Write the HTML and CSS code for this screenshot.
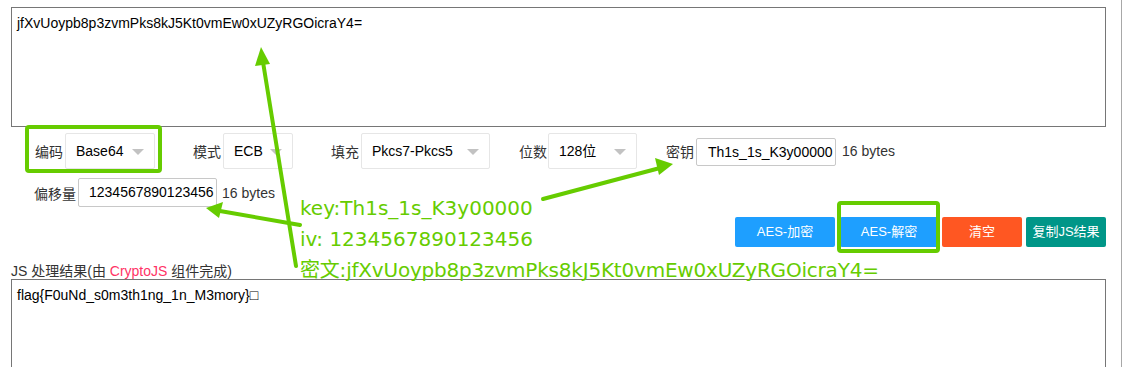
FILE: index.html
```html
<!DOCTYPE html>
<html lang="zh-CN">
<head>
<meta charset="utf-8">
<title>AES</title>
<link rel="stylesheet" href="styles.css">
</head>
<body>
<div class="page">
  <div class="box top-box">jfXvUoypb8p3zvmPks8kJ5Kt0vmEw0xUZyRGOicraY4=</div>

  <div class="opts">
    <span class="lbl l-enc">编码</span>
    <div class="select s-enc">Base64<i class="caret"></i></div>
    <span class="lbl l-mode">模式</span>
    <div class="select s-mode">ECB<i class="caret"></i></div>
    <span class="lbl l-pad">填充</span>
    <div class="select s-pad">Pkcs7-Pkcs5<i class="caret"></i></div>
    <span class="lbl l-bits">位数</span>
    <div class="select s-bits">128位<i class="caret"></i></div>
    <span class="lbl l-key">密钥</span>
    <div class="input i-key">Th1s_1s_K3y00000</div>
    <span class="bytes b-key">16 bytes</span>
  </div>

  <div class="opts2">
    <span class="lbl l-iv">偏移量</span>
    <div class="input i-iv">1234567890123456</div>
    <span class="bytes b-iv">16 bytes</span>
  </div>

  <div class="btns">
    <span class="btn blue b1">AES-加密</span>
    <span class="btn blue b2">AES-解密</span>
    <span class="btn orange b3">清空</span>
    <span class="btn teal b4">复制JS结果</span>
  </div>

  <div class="result-label">JS 处理结果(由 <span class="crypto">CryptoJS</span> 组件完成)</div>
  <div class="box bottom-box">flag{F0uNd_s0m3th1ng_1n_M3mory}□</div>
</div>

<div class="rail"></div>

<div class="notes">
  <div class="note n1">key:Th1s_1s_K3y00000</div>
  <div class="note n2">iv: 1234567890123456</div>
  <div class="note n3">密文:jfXvUoypb8p3zvmPks8kJ5Kt0vmEw0xUZyRGOicraY4=</div>
</div>

<svg class="overlay" width="1130" height="367" viewBox="0 0 1130 367">
  <g fill="none" stroke="#66cc00" stroke-width="4" stroke-linejoin="round">
    <rect x="27" y="127" width="133" height="44" rx="2"/>
    <rect x="839" y="203" width="99" height="48" rx="2"/>
  </g>
  <g stroke="#66cc00" stroke-width="4" stroke-linecap="round">
    <line x1="296" y1="266" x2="263" y2="62"/>
    <line x1="543" y1="199" x2="660" y2="168"/>
    <line x1="300" y1="225" x2="220" y2="211"/>
  </g>
  <g fill="#66cc00">
    <polygon points="261,47 270,64 255,66"/>
    <polygon points="673,164 655,158 659,175"/>
    <polygon points="206,208 223,202 219,218"/>
  </g>
</svg>
</body>
</html>
```

FILE: styles.css
```css
* { box-sizing: border-box; }

html, body {
  margin: 0;
  padding: 0;
  background: #fff;
}

body {
  width: 1130px;
  height: 367px;
  overflow: hidden;
  position: relative;
  font-family: "Liberation Sans", Arial, "Noto Sans CJK SC", sans-serif;
  font-size: 14px;
  color: #333;
}

.page {
  width: 1106px;
  padding: 7px 0 0 11px;
}

.box {
  border: 1px solid #767676;
  background: #fff;
  color: #000;
  font-size: 14px;
  line-height: 18px;
  padding: 6px 5px;
}

.top-box {
  width: 1095px;
  height: 120px;
}

.opts {
  display: flex;
  align-items: center;
  height: 36px;
  margin-top: 6px;
}

.opts2 {
  display: flex;
  align-items: center;
  height: 29px;
  margin-top: 9px;
}

.lbl {
  font-family: "Noto Sans CJK SC", sans-serif;
  font-size: 14px;
  color: #333;
  line-height: 20px;
  white-space: nowrap;
}

.l-enc { margin-left: 24px; margin-right: 2px; }
.l-mode { margin-left: 38px; margin-right: 2px; }
.l-pad { margin-left: 38px; margin-right: 2px; }
.l-bits { margin-left: 29px; margin-right: 1px; }
.l-key { margin-left: 29px; margin-right: 2px; }
.l-iv { margin-left: 23px; margin-right: 2px; }

.select {
  position: relative;
  height: 36px;
  border: 1px solid #e6e6e6;
  border-radius: 2px;
  background: #fff;
  color: #000;
  font-size: 14px;
  line-height: 34px;
  padding-left: 10px;
  font-family: "Liberation Sans", Arial, "Noto Sans CJK SC", sans-serif;
}

.s-enc { width: 90px; }
.s-mode { width: 70px; }
.s-pad { width: 129px; }
.s-bits { width: 89px; }

.caret {
  position: absolute;
  right: 10px;
  top: 15px;
  width: 0;
  height: 0;
  border-left: 6px solid transparent;
  border-right: 6px solid transparent;
  border-top: 6px solid #c2c2c2;
}

.input {
  border: 1px solid #c8c8c8;
  border-radius: 2px;
  background: #fff;
  color: #000;
  font-size: 14px;
  white-space: nowrap;
  overflow: hidden;
}

.i-key {
  width: 140px;
  height: 28px;
  line-height: 26px;
  padding-left: 11px;
  margin-top: 2px;
}

.i-iv {
  width: 139px;
  height: 29px;
  line-height: 27px;
  padding-left: 10px;
}

.bytes {
  color: #333;
  font-size: 14px;
  white-space: nowrap;
}

.b-key { margin-left: 6px; }
.b-iv { margin-left: 5px; }

.btns {
  display: flex;
  justify-content: flex-end;
  gap: 5px;
  margin-top: 10px;
  width: 1095px;
}

.btn {
  height: 30px;
  line-height: 30px;
  text-align: center;
  color: #fff;
  font-size: 13px;
  border-radius: 2px;
  font-family: "Liberation Sans", Arial, "Noto Sans CJK SC", sans-serif;
}

.blue { background: #1e9fff; }
.orange { background: #ff5722; }
.teal { background: #009688; }

.b1 { width: 100px; }
.b2 { width: 98px; }
.b3 { width: 80px; margin-left: -1px; }
.b4 { width: 80px; margin-left: -1px; }

.result-label {
  margin-top: 16px;
  height: 16px;
  line-height: 16px;
  font-size: 14px;
  color: #333;
  font-family: "Liberation Sans", Arial, "Noto Sans CJK SC", sans-serif;
}

.crypto { color: #ff3366; }

.bottom-box {
  width: 1095px;
  height: 88px;
  padding-top: 6px;
  border-bottom: none;
}

.rail {
  position: absolute;
  left: 1121px;
  top: 0;
  width: 1px;
  height: 367px;
  background: #a8a8a8;
}

.notes {
  position: absolute;
  left: 300px;
  top: 193px;
}

.note {
  color: #66cc00;
  font-family: "DejaVu Sans", "Noto Sans CJK SC", sans-serif;
  font-size: 20px;
  line-height: 31px;
  white-space: nowrap;
}

.n3 { letter-spacing: -0.2px; }

.overlay {
  position: absolute;
  left: 0;
  top: 0;
  pointer-events: none;
}
```
